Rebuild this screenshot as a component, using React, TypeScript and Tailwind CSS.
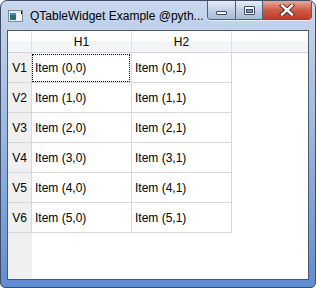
import React from 'react';

const rows = [0, 1, 2, 3, 4, 5];

function AppIcon() {
  return (
    <svg width="16" height="14" viewBox="0 0 16 14" className="shrink-0">
      <rect x="0.5" y="1.5" width="14" height="11" fill="#e8ecf0" stroke="#7d8a96" />
      <rect x="2" y="4" width="6" height="7" fill="#2f6f6a" />
      <rect x="2" y="4" width="6" height="2" fill="#4a8fbf" />
      <rect x="9" y="4" width="4" height="7" fill="#f4f6f8" />
      <rect x="13" y="2" width="1" height="3" fill="#111" />
    </svg>
  );
}

function CaptionButtons() {
  return (
    <div className="flex h-[19px] mr-[3px] rounded-b-[4px] border border-t-0 border-[#4b5f82] overflow-hidden shadow-[0_1px_0_rgba(255,255,255,0.6)]">
      <div className="w-[28px] h-full flex items-center justify-center bg-gradient-to-b from-[#e4ebf5] via-[#c3d0e4] to-[#a9bad5] border-r border-[#4b5f82]">
        <div className="w-[11px] h-[4px] mt-[5px] bg-white border border-[#3a4a66] rounded-[1px]" />
      </div>
      <div className="w-[27px] h-full flex items-center justify-center bg-gradient-to-b from-[#e4ebf5] via-[#c3d0e4] to-[#a9bad5] border-r border-[#4b5f82]">
        <div className="w-[11px] h-[9px] bg-white border border-[#3a4a66] rounded-[1px] flex items-center justify-center">
          <div className="w-[7px] h-[4px] mt-[1px] bg-[#7d93b8] border border-[#3a4a66]" />
        </div>
      </div>
      <div className="w-[48px] h-full flex items-center justify-center bg-gradient-to-b from-[#e8a89a] via-[#cf5c45] to-[#c23a22]">
        <svg width="16" height="12" viewBox="0 0 16 12">
          <path d="M3 1.5 L13 10.5 M13 1.5 L3 10.5" stroke="#3b2a2a" strokeWidth="4.2" strokeLinecap="square" />
          <path d="M3 1.5 L13 10.5 M13 1.5 L3 10.5" stroke="#ffffff" strokeWidth="2.4" strokeLinecap="square" />
        </svg>
      </div>
    </div>
  );
}

export default function App() {
  return (
    <div
      className="w-[316px] h-[288px] flex flex-col border border-[#3f4e66] rounded-t-[7px] rounded-b-[5px] bg-gradient-to-b from-[#c8d7ed] via-[#98b4e0] to-[#5f8dd2] overflow-hidden"
      style={{ fontFamily: '"Liberation Sans", Arial, sans-serif' }}
    >
      <div className="h-[29px] flex items-start justify-between shrink-0">
        <div className="flex items-center gap-[6px] pl-[7px] pt-[8px]">
          <AppIcon />
          <span className="text-[12px] leading-[14px] text-black whitespace-nowrap">QTableWidget Example @pyth...</span>
        </div>
        <CaptionButtons />
      </div>

      <div className="flex-1 mx-[6px] mb-[7px] border border-[#4e5968] bg-white flex flex-col text-[12px] text-black overflow-hidden">
        <div className="flex h-[22px] shrink-0 border-b border-[#d5d5d5] bg-gradient-to-b from-white from-50% to-[#f4f5f7] to-50%">
          <div className="w-[24px] border-r border-[#e2e2e2]" />
          <div className="w-[100px] border-r border-[#e2e2e2] flex items-center justify-center">H1</div>
          <div className="w-[100px] border-r border-[#e2e2e2] flex items-center justify-center">H2</div>
          <div className="flex-1" />
        </div>

        {rows.map((r) => (
          <div key={r} className="flex h-[30px] shrink-0">
            <div className="w-[24px] bg-[#f0f0f0] border-r border-b border-[#d8d8d8] flex items-center justify-center">
              V{r + 1}
            </div>
            <div className="relative w-[100px] border-r border-b border-[#d8d8d8] flex items-center pl-[3px]">
              {r === 0 && (
                <div className="absolute left-0 right-[1px] top-[1px] bottom-0 border border-dotted border-black" />
              )}
              Item ({r},0)
            </div>
            <div className="w-[100px] border-r border-b border-[#d8d8d8] flex items-center pl-[3px]">
              Item ({r},1)
            </div>
          </div>
        ))}

        <div className="flex-1 flex">
          <div className="w-[24px] bg-[#f0f0f0]" />
        </div>
      </div>
    </div>
  );
}
